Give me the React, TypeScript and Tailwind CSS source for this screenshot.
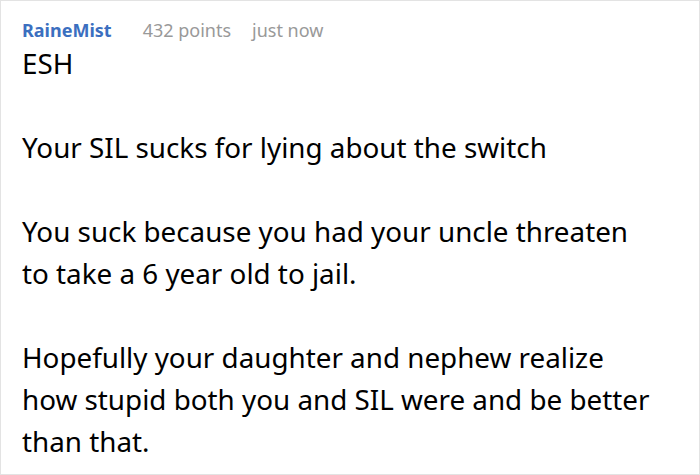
export default function App() {
  return (
    <div className="w-[700px] h-[475px] bg-white border border-[#e3e3e3] overflow-hidden" style={{ fontFamily: '"Noto Sans", sans-serif' }}>
      <div className="px-[21px] pt-[17px]">
        <div className="flex items-baseline text-[18px] leading-[24px]">
          <span className="font-bold text-[#3b6fc0]">RaineMist</span>
          <span className="ml-[31px] text-[#999999]">432 points</span>
          <span className="ml-[21px] text-[#999999]">just now</span>
        </div>
        <div className="text-[27.8px] leading-[42px] text-black w-[634px]">
          <p>ESH</p>
          <br />
          <p>Your SIL sucks for lying about the switch</p>
          <br />
          <p>You suck because you had your uncle threaten to take a 6 year old to jail.</p>
          <br />
          <p>Hopefully your daughter and nephew realize how stupid both you and SIL were and be better than that.</p>
        </div>
      </div>
    </div>
  )
}
